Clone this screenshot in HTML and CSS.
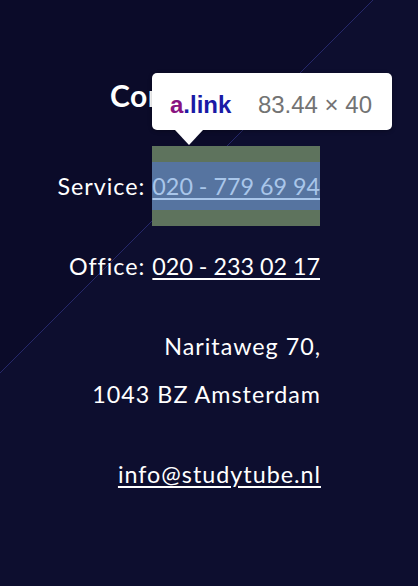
FILE: index.html
```html
<!DOCTYPE html>
<html lang="nl">
<head>
<meta charset="utf-8">
<title>Contact</title>
<link rel="stylesheet" href="styles.css">
</head>
<body>
<section class="contact">
  <h2 class="contact-title">Contact</h2>
  <div class="contact-list">
    <p class="contact-row">Service: <a class="link phone inspected" href="#">020 - 779 69 94</a><br>Office: <a class="link phone" href="#">020 - 233 02 17</a></p>
    <p class="contact-row">Naritaweg 70,<br>1043 BZ Amsterdam</p>
    <p class="contact-row"><a class="link" href="#">info@studytube.nl</a></p>
  </div>
</section>
<div class="inspect-tip">
  <span class="tip-name"><span class="tip-tag">a</span><span class="tip-class">.link</span></span>
  <span class="tip-size">83.44 × 40</span>
</div>
</body>
</html>
```

FILE: styles.css
```css
html, body {
  margin: 0;
  padding: 0;
  height: 100%;
}

body {
  position: relative;
  background: linear-gradient(135deg, #0b0b29 0, #0b0b29 263.3px, #25276a 263.3px, #25276a 264.2px, #0d0e2f 264.2px, #0d0e2f 100%);
  color: #ffffff;
  font-family: Lato, "Open Sans", sans-serif;
  overflow: hidden;
}

.contact {
  padding: 77px 98px 0 20px;
}

.contact-title {
  margin: 0 0 33px 90px;
  font-size: 30px;
  line-height: 36px;
  font-weight: 700;
  letter-spacing: 0.5px;
  color: #ffffff;
}

.contact-list {
  display: flex;
  flex-direction: column;
  gap: 16px;
  text-align: right;
}

.contact-row {
  margin: 0 -1px 0 0;
  font-size: 23.3px;
  line-height: 48px;
  letter-spacing: 1px;
  white-space: nowrap;
}

.link {
  display: inline-block;
  padding: 16px 0;
  color: #ffffff;
  text-decoration: underline;
  text-decoration-thickness: 2px;
  text-underline-offset: 3px;
}

.link.phone {
  letter-spacing: 0;
  margin-right: 1px;
}

.link.inspected {
  color: #a9c6ea;
  background: linear-gradient(#5674a0, #5674a0) content-box, linear-gradient(#5e735d, #5e735d) padding-box;
}

.inspect-tip {
  position: absolute;
  left: 152px;
  top: 73px;
  width: 240px;
  height: 57px;
  box-sizing: border-box;
  padding: 6px 20px 0 18px;
  display: flex;
  align-items: center;
  justify-content: space-between;
  background: #ffffff;
  border-radius: 5px;
  box-shadow: 0 1px 4px rgba(0, 0, 0, 0.3);
  font-family: "Liberation Sans", Arial, sans-serif;
  font-size: 24px;
}

.inspect-tip::after {
  content: "";
  position: absolute;
  left: 23px;
  top: 57px;
  border-left: 14px solid transparent;
  border-right: 14px solid transparent;
  border-top: 15px solid #ffffff;
}

.tip-name {
  font-weight: 700;
}

.tip-tag {
  color: #881280;
}

.tip-class {
  color: #1a1aa6;
}

.tip-size {
  color: #737373;
}
```
